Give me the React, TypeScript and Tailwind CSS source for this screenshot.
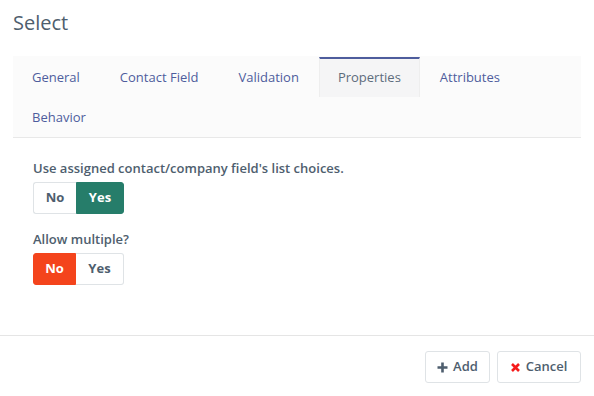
import { useState } from 'react';

const tabs = ['General', 'Contact Field', 'Validation', 'Properties', 'Attributes', 'Behavior'];

interface ToggleProps {
    value: boolean;
    onChange: (v: boolean) => void;
}

const YesNoToggle = ({ value, onChange }: ToggleProps) => {
    return (
        <div className="flex h-[32px] w-[91px] text-[13px] font-bold">
            <button
                onClick={() => onChange(false)}
                className={`w-[43px] rounded-l-[3px] border ${
                    !value ? 'bg-[#f4441c] border-[#f4441c] text-white' : 'bg-white border-[#dfe3e6] border-r-0 text-[#4e5e6e]'
                }`}
            >
                No
            </button>
            <button
                onClick={() => onChange(true)}
                className={`w-[48px] rounded-r-[3px] border ${
                    value ? 'bg-[#267d6a] border-[#267d6a] text-white' : 'bg-white border-[#dfe3e6] border-l-0 text-[#4e5e6e]'
                }`}
            >
                Yes
            </button>
        </div>
    );
};

const App = () => {
    const [active, setActive] = useState('Properties');
    const [useList, setUseList] = useState(true);
    const [multiple, setMultiple] = useState(false);

    return (
        <div
            className="w-[594px] h-[396px] bg-white flex flex-col text-[#4e5e6e]"
            style={{ fontFamily: '"Open Sans", "Noto Sans", sans-serif' }}
        >
            {/* Title */}
            <div className="h-[56px] px-[13px] pt-[8px] text-[20px] leading-[30px]">Select</div>

            {/* Tabs */}
            <div className="mx-[13px] bg-[#fbfbfb] border-b border-[#e8e8e8] flex flex-wrap pt-[1px]">
                {tabs.map((tab, i) => (
                    <button
                        key={tab}
                        onClick={() => setActive(tab)}
                        className={`h-[40px] text-[13px] leading-[18px] ${
                            active === tab
                                ? 'px-[18px] bg-[#f5f5f6] border-t-2 border-x border-t-[#4e5d9d] border-x-[#eeeeee] text-[#5d6c7c] pb-[2px]'
                                : i === 0 || i === 5
                                ? 'pl-[19px] pr-[20px] text-[#4e5d9d]'
                                : 'px-[20px] text-[#4e5d9d]'
                        }`}
                    >
                        {tab}
                    </button>
                ))}
            </div>

            {/* Properties */}
            <div className="flex-1 px-[33px] pt-[21px]">
                <div className="text-[13px] font-semibold leading-[18px] mb-[5px]">
                    Use assigned contact/company field's list choices.
                </div>
                <YesNoToggle value={useList} onChange={setUseList} />
                <div className="text-[13px] font-semibold leading-[18px] mt-[16px] mb-[5px]">Allow multiple?</div>
                <YesNoToggle value={multiple} onChange={setMultiple} />
            </div>

            {/* Footer */}
            <div className="h-[61px] border-t border-[#e5e5e5] flex justify-end items-start gap-[7px] px-[13px] pt-[15px]">
                <button className="h-[32px] w-[65px] border border-[#dfe3e6] rounded-[3px] flex items-center justify-center gap-[5px] text-[13px] font-semibold">
                    <svg width="11" height="11" viewBox="0 0 11 11">
                        <path d="M5.5 0.5v10M0.5 5.5h10" stroke="#4e5e6e" strokeWidth="2.6" />
                    </svg>
                    Add
                </button>
                <button className="h-[32px] w-[84px] border border-[#dfe3e6] rounded-[3px] flex items-center justify-center gap-[6px] text-[13px] font-semibold">
                    <svg width="9" height="9" viewBox="0 0 9 9">
                        <path d="M1 1l7 7M8 1l-7 7" stroke="#f51b1b" strokeWidth="2.6" />
                    </svg>
                    Cancel
                </button>
            </div>
        </div>
    );
};

export default App;
